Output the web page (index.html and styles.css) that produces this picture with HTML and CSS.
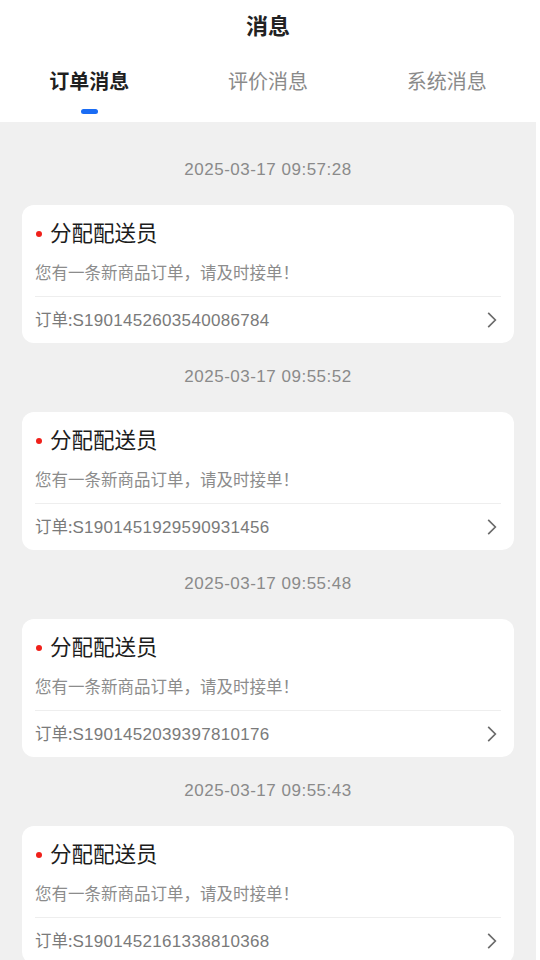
FILE: index.html
```html
<!DOCTYPE html>
<html lang="zh-CN">

<head>
    <meta charset="UTF-8">
    <title>消息</title>
    <meta name="viewport" content="width=device-width, initial-scale=1.0">
    <link rel="stylesheet" href="styles.css">
</head>

<body>
    <div class="page">
        <header class="top">
            <h1 class="title">消息</h1>
            <nav class="tabs">
                <div class="tab active">订单消息</div>
                <div class="tab">评价消息</div>
                <div class="tab">系统消息</div>
            </nav>
        </header>

        <section class="list">
            <div class="item">
                <p class="time">2025-03-17 09:57:28</p>
                <div class="card">
                    <h2 class="card-title">分配配送员</h2>
                    <p class="card-text">您有一条新商品订单，请及时接单！</p>
                    <div class="card-foot">
                        <span>订单:<span class="num">S1901452603540086784</span></span>
                        <svg class="arrow" viewBox="0 0 10 16" width="11" height="18"><path d="M2 1.5 L8.5 8 L2 14.5" /></svg>
                    </div>
                </div>
            </div>

            <div class="item">
                <p class="time">2025-03-17 09:55:52</p>
                <div class="card">
                    <h2 class="card-title">分配配送员</h2>
                    <p class="card-text">您有一条新商品订单，请及时接单！</p>
                    <div class="card-foot">
                        <span>订单:<span class="num">S1901451929590931456</span></span>
                        <svg class="arrow" viewBox="0 0 10 16" width="11" height="18"><path d="M2 1.5 L8.5 8 L2 14.5" /></svg>
                    </div>
                </div>
            </div>

            <div class="item">
                <p class="time">2025-03-17 09:55:48</p>
                <div class="card">
                    <h2 class="card-title">分配配送员</h2>
                    <p class="card-text">您有一条新商品订单，请及时接单！</p>
                    <div class="card-foot">
                        <span>订单:<span class="num">S1901452039397810176</span></span>
                        <svg class="arrow" viewBox="0 0 10 16" width="11" height="18"><path d="M2 1.5 L8.5 8 L2 14.5" /></svg>
                    </div>
                </div>
            </div>

            <div class="item">
                <p class="time">2025-03-17 09:55:43</p>
                <div class="card">
                    <h2 class="card-title">分配配送员</h2>
                    <p class="card-text">您有一条新商品订单，请及时接单！</p>
                    <div class="card-foot">
                        <span>订单:<span class="num">S1901452161338810368</span></span>
                        <svg class="arrow" viewBox="0 0 10 16" width="11" height="18"><path d="M2 1.5 L8.5 8 L2 14.5" /></svg>
                    </div>
                </div>
            </div>
        </section>
    </div>
</body>

</html>
```

FILE: styles.css
```css
/* Reset */

* {
    padding: 0;
    margin: 0;
    box-sizing: border-box;
}

html,
body {
    height: 100%;
    overflow: hidden;
    background-color: #ffffff;
}

body {
    font-family: "Noto Sans", "Noto Sans CJK SC", sans-serif;
    color: #222222;
}

.page {
    width: 536px;
    min-height: 100vh;
    background-color: #f0f0f0;
}

/* En-tête */

.top {
    background-color: #ffffff;
    height: 122px;
}

.title {
    height: 50px;
    line-height: 50px;
    text-align: center;
    font-size: 22px;
    font-weight: 700;
}

.tabs {
    display: grid;
    grid-template-columns: repeat(3, 1fr);
    margin-top: 18px;
}

.tab {
    position: relative;
    text-align: center;
    font-size: 20px;
    line-height: 28px;
    color: #8a8a8a;
}

.tab.active {
    color: #1f1f1f;
    font-weight: 700;
}

/* petit trait bleu sous l'onglet actif */
.tab.active::after {
    content: "";
    position: absolute;
    left: 50%;
    top: 41px;
    width: 17px;
    height: 5px;
    margin-left: -8px;
    border-radius: 3px;
    background-color: #1a6cf4;
}

/* Liste des messages */

.list {
    padding: 14px 22px 0;
}

.time {
    padding: 23px 0 24px;
    line-height: 22px;
    text-align: center;
    font-family: "Liberation Sans", "Noto Sans CJK SC", sans-serif;
    font-size: 17px;
    letter-spacing: 0.5px;
    color: #8a8a8a;
}

.card {
    background-color: #ffffff;
    border-radius: 12px;
    padding: 14px 13px 0;
}

.card-title {
    position: relative;
    padding-left: 15px;
    font-size: 21.5px;
    font-weight: 400;
    line-height: 28px;
    color: #1c1c1c;
}

.card-title::before {
    content: "";
    position: absolute;
    left: 1px;
    top: 12px;
    width: 6px;
    height: 6px;
    border-radius: 50%;
    background-color: #f0201a;
}

.card-text {
    margin-top: 15px;
    padding-bottom: 12px;
    font-size: 16.5px;
    line-height: 22px;
    color: #8c8c8c;
    border-bottom: 1px solid #eeeeee;
}

.card-foot {
    height: 46px;
    display: flex;
    align-items: center;
    justify-content: space-between;
    font-size: 16.5px;
    line-height: 22px;
    color: #7a7a7a;
}

.num {
    font-family: "Liberation Sans", sans-serif;
    font-size: 17px;
    letter-spacing: 0.3px;
}

.arrow {
    margin-right: 4px;
    fill: none;
    stroke: #6a6a6a;
    stroke-width: 1.5;
}
```
